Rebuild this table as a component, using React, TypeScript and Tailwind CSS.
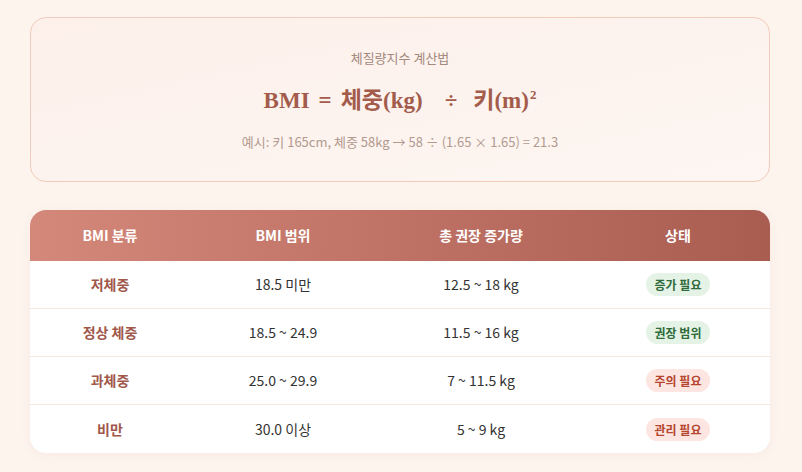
const ROWS = [
  { name: "저체중", range: "18.5 미만", gain: "12.5 ~ 18 kg", status: "증가 필요", tone: "green" },
  { name: "정상 체중", range: "18.5 ~ 24.9", gain: "11.5 ~ 16 kg", status: "권장 범위", tone: "green" },
  { name: "과체중", range: "25.0 ~ 29.9", gain: "7 ~ 11.5 kg", status: "주의 필요", tone: "red" },
  { name: "비만", range: "30.0 이상", gain: "5 ~ 9 kg", status: "관리 필요", tone: "red" },
];

const COLS = "grid grid-cols-[160px_186px_210px_184px]";

export default function App() {
  return (
    <div
      className="min-h-[472px] bg-[#fdf4ee] pl-[30px] pr-[32px] pt-[17px] pb-5"
      style={{ fontFamily: '"Noto Sans CJK KR", "Noto Sans", sans-serif' }}
    >
      <div className="rounded-2xl border border-[#f2cbbb] bg-gradient-to-br from-[#fdf0ea] to-[#fdf6f2] px-6 pt-[30px] pb-[29px] text-center">
        <p className="text-[13px] leading-5 text-[#a3897e]">체질량지수 계산법</p>
        <p
          className="mt-4 flex items-baseline justify-center text-[23px] leading-[34px] font-bold text-[#a35c4b]"
          style={{ fontFamily: '"Liberation Serif", "Noto Sans CJK KR", serif' }}
        >
          <span>BMI</span>
          <span className="mx-[9px]">=</span>
          <span>체중(kg)</span>
          <span className="ml-[22px] mr-[16px]">÷</span>
          <span>키(m)</span>
          <span className="relative -top-[9px] ml-[1px] text-[13px] leading-none">2</span>
        </p>
        <p className="mt-[14px] text-[13px] leading-5 text-[#b29a8f]">
          예시: 키 165cm, 체중 58kg → 58 ÷ (1.65 × 1.65) = 21.3
        </p>
      </div>

      <div className="mt-[28px] overflow-hidden rounded-2xl bg-white shadow-[0_2px_10px_rgba(180,120,100,0.08)]">
        <div className={`${COLS} h-[51px] items-center bg-gradient-to-r from-[#d4887a] to-[#a95c50] text-center text-[14px] font-bold text-white`}>
          <div>BMI 분류</div>
          <div>BMI 범위</div>
          <div>총 권장 증가량</div>
          <div>상태</div>
        </div>
        {ROWS.map((r, i) => (
          <div
            key={r.name}
            className={`${COLS} h-12 items-center text-center text-[14px] text-[#333] ${
              i < ROWS.length - 1 ? "border-b border-[#f3e9e3]" : ""
            }`}
          >
            <div className="font-bold text-[#a0574a]">{r.name}</div>
            <div>{r.range}</div>
            <div>{r.gain}</div>
            <div className="flex justify-center">
              <span
                className={`rounded-full px-[9px] py-[3px] text-[12px] leading-[17px] font-bold ${
                  r.tone === "green"
                    ? "bg-[#e5f3e6] text-[#2f6b3b]"
                    : "bg-[#fde5e1] text-[#b5452f]"
                }`}
              >
                {r.status}
              </span>
            </div>
          </div>
        ))}
      </div>
    </div>
  );
}
